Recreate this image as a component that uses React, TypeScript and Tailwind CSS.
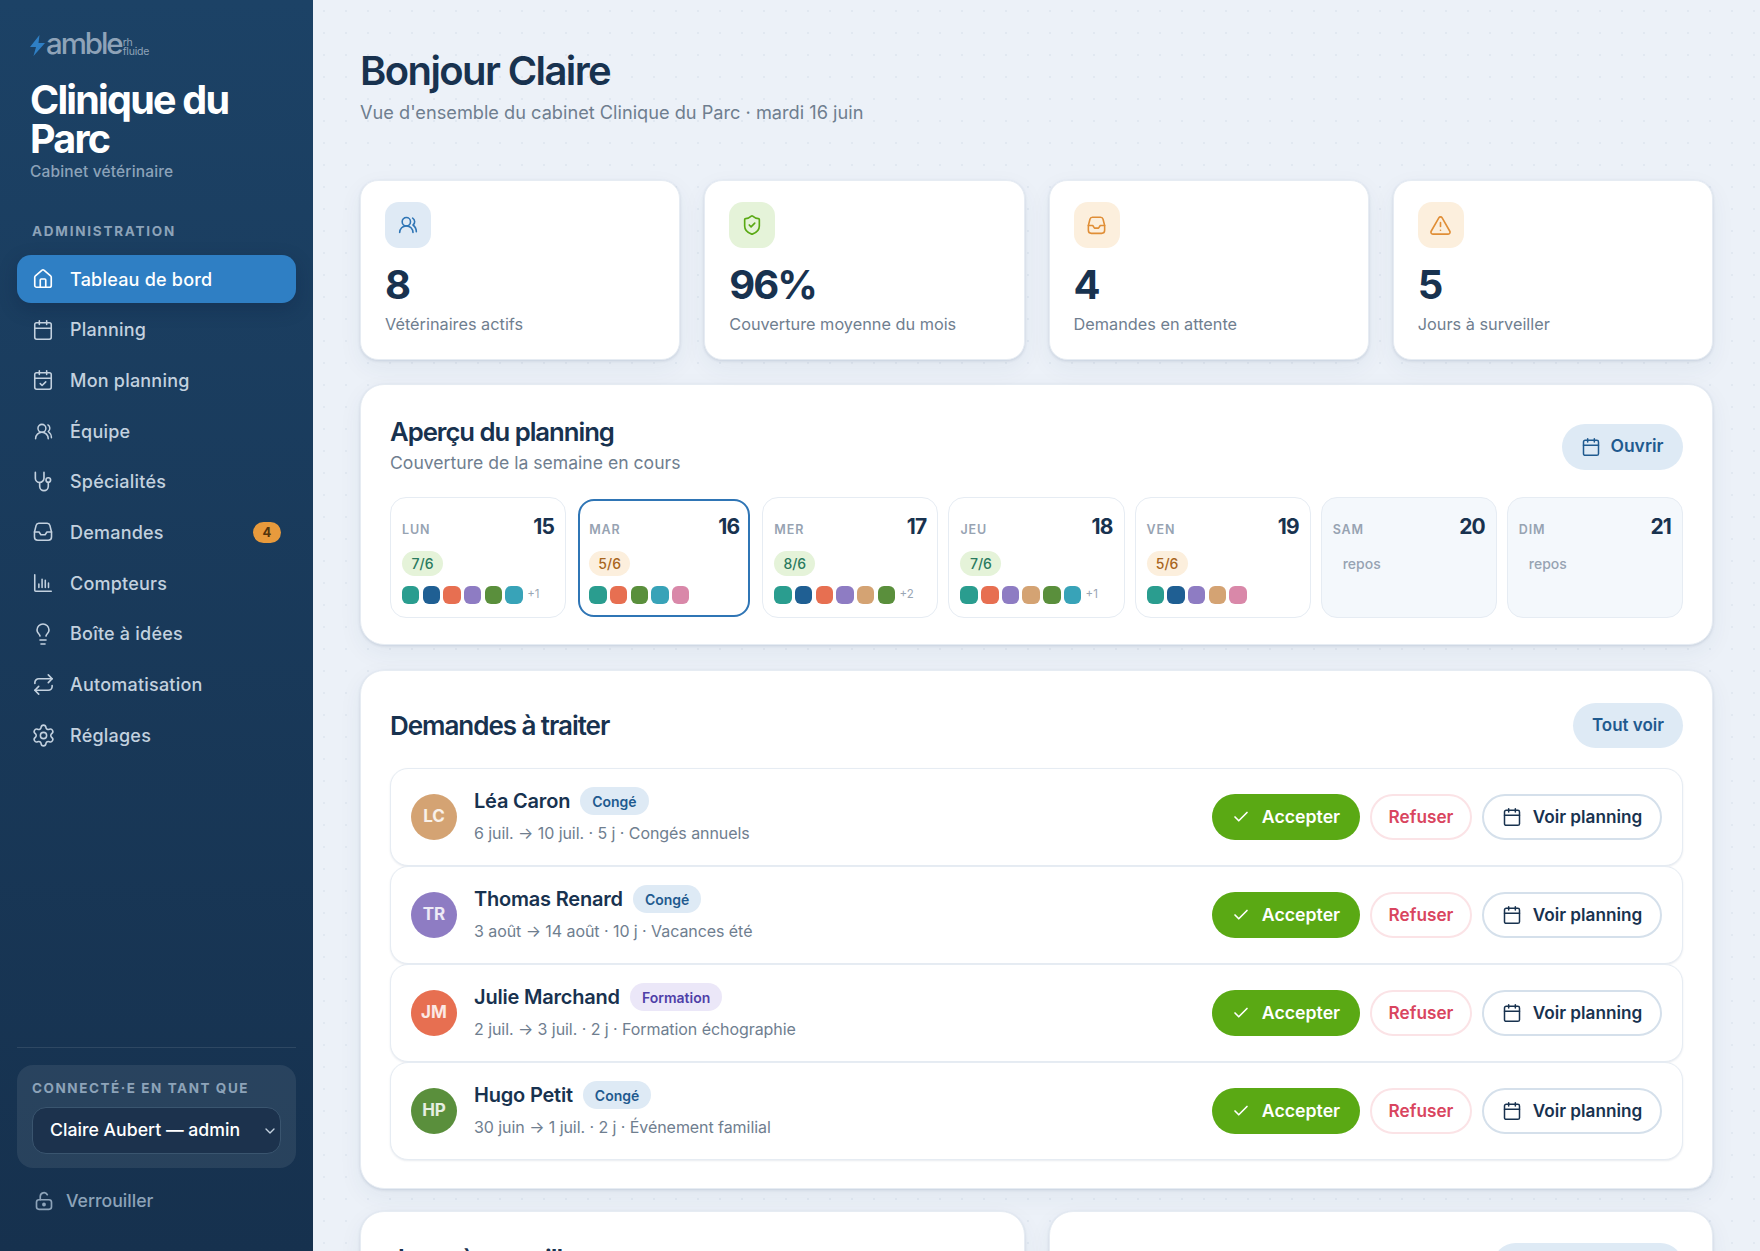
import {
  House, Calendar, CalendarCheck, UsersRound, Lightbulb, Repeat, Settings,
  ShieldCheck, TriangleAlert, Check, ChevronDown,
} from 'lucide-react'
import type { ReactNode } from 'react'

function ChartIcon() {
  return (
    <svg width="22" height="22" viewBox="0 0 24 24" fill="none" stroke="currentColor" strokeWidth="1.7" strokeLinecap="round" strokeLinejoin="round">
      <path d="M3 3v17a1 1 0 0 0 1 1h17" />
      <path d="M7.5 17v-4M11 17V8M14.5 17V9M18 17v-5" />
    </svg>
  )
}

function StethIcon() {
  return (
    <svg width="23" height="23" viewBox="0 0 24 24" fill="none" stroke="currentColor" strokeWidth="1.7" strokeLinecap="round" strokeLinejoin="round">
      <path d="M3.5 2.5v6a4.5 4.5 0 0 0 9 0v-6" />
      <path d="M8 13v4a4.5 4.5 0 0 0 9 0v-3" />
      <circle cx="17" cy="10.5" r="2.4" />
    </svg>
  )
}

function TrayIcon({ size = 22, width = 1.7 }: { size?: number; width?: number }) {
  return (
    <svg width={size} height={size} viewBox="0 0 24 24" fill="none" stroke="currentColor" strokeWidth={width} strokeLinecap="round" strokeLinejoin="round">
      <path d="M7.4 2.5h9.2a3 3 0 0 1 2.9 2.3l1.8 7.2v5.5a3.5 3.5 0 0 1-3.5 3.5H6.2a3.5 3.5 0 0 1-3.5-3.5V12l1.8-7.2a3 3 0 0 1 2.9-2.3Z" />
      <path d="M2.7 12h5l2 3h4.600l2-3h5" />
    </svg>
  )
}

function OpenLockIcon() {
  return (
    <svg width="20" height="20" viewBox="0 0 24 24" fill="none" stroke="currentColor" strokeWidth="2" strokeLinecap="round" strokeLinejoin="round">
      <rect x="3" y="10.500" width="18" height="11.500" rx="3" />
      <path d="M7.500 10.500V6.500a4.500 4.500 0 0 1 8.500-2" />
      <circle cx="12" cy="16.200" r="1.300" fill="currentColor" />
    </svg>
  )
}

const nav: { label: string; icon: ReactNode; badge?: string }[] = [
  { label: 'Tableau de bord', icon: <House size={22} strokeWidth={1.8} /> },
  { label: 'Planning', icon: <Calendar size={22} strokeWidth={1.7} /> },
  { label: 'Mon planning', icon: <CalendarCheck size={22} strokeWidth={1.7} /> },
  { label: 'Équipe', icon: <UsersRound size={19} strokeWidth={1.9} /> },
  { label: 'Spécialités', icon: <StethIcon /> },
  { label: 'Demandes', icon: <TrayIcon />, badge: '4' },
  { label: 'Compteurs', icon: <ChartIcon /> },
  { label: 'Boîte à idées', icon: <Lightbulb size={24} strokeWidth={1.6} /> },
  { label: 'Automatisation', icon: <Repeat size={23} strokeWidth={1.7} /> },
  { label: 'Réglages', icon: <Settings size={25} strokeWidth={1.5} /> },
]

const stats = [
  { value: '8', label: 'Vétérinaires actifs', bg: 'bg-[#dfeaf5]', fg: 'text-[#2f75b5]', icon: <UsersRound size={20} strokeWidth={1.9} /> },
  { value: '96%', label: 'Couverture moyenne du mois', bg: 'bg-[#e5f3d9]', fg: 'text-[#5aa914]', icon: <ShieldCheck size={22} strokeWidth={1.8} /> },
  { value: '4', label: 'Demandes en attente', bg: 'bg-[#fcefdd]', fg: 'text-[#e08e36]', icon: <TrayIcon size={21} width={1.8} /> },
  { value: '5', label: 'Jours à surveiller', bg: 'bg-[#fcefdd]', fg: 'text-[#e08e36]', icon: <TriangleAlert size={23} strokeWidth={1.7} /> },
]

const C = {
  teal: 'bg-[#2a9d8f]', navy: 'bg-[#1f5f93]', coral: 'bg-[#e76f51]', purple: 'bg-[#8e7cc3]',
  green: 'bg-[#5a8f3c]', cyan: 'bg-[#38a3b8]', tan: 'bg-[#d4a373]', pink: 'bg-[#d988a9]',
}

const days = [
  { d: 'LUN', n: '15', cov: '7/6', ok: true, dots: [C.teal, C.navy, C.coral, C.purple, C.green, C.cyan], more: '+1' },
  { d: 'MAR', n: '16', cov: '5/6', ok: false, today: true, dots: [C.teal, C.coral, C.green, C.cyan, C.pink] },
  { d: 'MER', n: '17', cov: '8/6', ok: true, dots: [C.teal, C.navy, C.coral, C.purple, C.tan, C.green], more: '+2' },
  { d: 'JEU', n: '18', cov: '7/6', ok: true, dots: [C.teal, C.coral, C.purple, C.tan, C.green, C.cyan], more: '+1' },
  { d: 'VEN', n: '19', cov: '5/6', ok: false, dots: [C.teal, C.navy, C.purple, C.tan, C.pink] },
  { d: 'SAM', n: '20', rest: true },
  { d: 'DIM', n: '21', rest: true },
]

const requests = [
  { initials: 'LC', color: 'bg-[#d4a373]', name: 'Léa Caron', tag: 'Congé', detail: '6 juil. → 10 juil. · 5 j · Congés annuels' },
  { initials: 'TR', color: 'bg-[#8e7cc3]', name: 'Thomas Renard', tag: 'Congé', detail: '3 août → 14 août · 10 j · Vacances été' },
  { initials: 'JM', color: 'bg-[#e76f51]', name: 'Julie Marchand', tag: 'Formation', detail: '2 juil. → 3 juil. · 2 j · Formation échographie' },
  { initials: 'HP', color: 'bg-[#5a8f3c]', name: 'Hugo Petit', tag: 'Congé', detail: '30 juin → 1 juil. · 2 j · Événement familial' },
]

const cardShadow = 'shadow-[0_1px_3px_rgba(30,60,100,0.14),0_8px_24px_rgba(30,60,100,0.06)]'

function Sidebar() {
  return (
    <aside className="flex w-[313px] shrink-0 flex-col bg-gradient-to-b from-[#1c4266] to-[#16314e] px-[17px]">
      <div className="mt-[25px] flex h-[38px] items-center pl-[13px]">
        <svg width="15" height="21" viewBox="0 0 15 21" className="mt-[3px]">
          <path d="M9.500 0 L0 12 H6 L3.500 21 L15 8 H8.500 Z" fill="#2f7fc4" />
        </svg>
        <span className="ml-[1px] text-[29.500px] font-medium leading-none tracking-[-0.07em] text-[#8fa3b8]">amble</span>
        <span className="mt-[5px] ml-[1px] flex flex-col text-[10.500px] leading-[9px] tracking-[-0.02em] text-[#8fa3b8]">
          <span>rh</span>
          <span>fluide</span>
        </span>
      </div>
      <h1 className="mt-[18px] pl-[13px] text-[39.500px] font-bold leading-[39px] tracking-[-0.045em] text-white">
        Clinique du
        <br />
        Parc
      </h1>
      <p className="mt-[3px] pl-[13px] text-[15.500px] font-medium leading-[20px] tracking-[0.01em] text-[#8da3b9]">Cabinet vétérinaire</p>
      <p className="mt-[39px] pl-[15px] text-[13.500px] font-bold leading-[20px] tracking-[0.13em] text-[#8da3b9]">ADMINISTRATION</p>

      <nav className="mt-[14px] flex flex-col gap-[2.700px]">
        {nav.map((item, i) => (
          <div
            key={item.label}
            className={
              'flex h-[48px] items-center rounded-[14px] pr-[15px] text-[18px] font-medium ' +
              (i === 0
                ? 'bg-[#2f7fc4] text-white shadow-[0_6px_18px_rgba(10,30,60,0.28)]'
                : 'text-[#c3d1df]')
            }
          >
            <span className="flex w-[53px] shrink-0 items-center justify-center pr-[1px]">{item.icon}</span>
            <span className="tracking-[0.012em]">{item.label}</span>
            {item.badge && (
              <span className="ml-auto flex h-[21px] w-[28px] items-center justify-center rounded-full bg-[#e89a3c] text-[13px] font-bold text-[#54340c]">
                {item.badge}
              </span>
            )}
          </div>
        ))}
      </nav>

      <div className="mt-auto border-t border-white/10 pt-[17px]">
        <div className="rounded-[16px] bg-white/[0.08] px-[15px] pt-[13px] pb-[14px]">
          <p className="text-[13.500px] font-bold leading-[20px] tracking-[0.115em] text-[#8da3b9]">CONNECTÉ·E EN TANT QUE</p>
          <div className="mt-[9px] flex h-[47px] items-center justify-between rounded-[14px] border border-[#3a556f] bg-[#1c324d] pr-[2px] pl-[17px] text-[17.700px] font-medium text-white">
            <span>Claire Aubert — admin</span>
            <ChevronDown size={16} strokeWidth={2} className="text-[#c3d1df]" />
          </div>
        </div>
        <div className="mt-[20px] mb-[37px] flex h-[26px] items-center pl-[17px] text-[17.700px] font-medium text-[#8da3b9]">
          <OpenLockIcon />
          <span className="ml-[12px]">Verrouiller</span>
        </div>
      </div>
    </aside>
  )
}

function StatCard({ s }: { s: (typeof stats)[number] }) {
  return (
    <div className={'h-[180px] rounded-[18px] border border-[#e6ecf3] bg-white pt-[21px] pl-[24px] ' + cardShadow}>
      <div className={'flex h-[46px] w-[46px] items-center justify-center rounded-[14px] ' + s.bg + ' ' + s.fg}>{s.icon}</div>
      <p className="mt-[15px] text-[40px] font-bold leading-[44px] tracking-[-0.05em] text-[#18324f]">{s.value}</p>
      <p className="mt-[5px] text-[16.300px] leading-[24px] text-[#6f7e8f]">{s.label}</p>
    </div>
  )
}

function DayTile({ day }: { day: (typeof days)[number] }) {
  const base = day.today
    ? 'mx-[2px] my-[1.500px] border-2 border-[#2f75b5] bg-white px-[9px] pt-[12.500px]'
    : day.rest
      ? 'border border-[#e6ecf3] bg-[#f4f8fc] px-[11px] pt-[15px]'
      : 'border border-[#e6ecf3] bg-white px-[11px] pt-[15px]'
  return (
    <div className={'rounded-[16px] ' + base}>
      <div className="flex h-[28px] items-baseline justify-between">
        <span className="text-[12.500px] font-semibold tracking-[0.07em] text-[#97a3b2]">{day.d}</span>
        <span className="text-[21px] font-bold leading-[28px] tracking-[-0.04em] text-[#18324f]">{day.n}</span>
      </div>
      {day.rest ? (
        <p className="mt-[10px] h-[25px] pl-[10px] text-[14px] font-medium leading-[25px] text-[#97a3b2]">repos</p>
      ) : (
        <>
          <span
            className={
              'mt-[10px] flex h-[25px] w-[41px] items-center justify-center rounded-full text-[14px] font-medium ' +
              (day.ok ? 'bg-[#e5f3d9] text-[#2a7a5f]' : 'bg-[#fcefdd] text-[#a8651c]')
            }
          >
            {day.cov}
          </span>
          <div className="mt-[10px] flex items-center gap-[3.300px]">
            {day.dots?.map((c, i) => (
              <span key={i} className={'h-[18px] w-[17.400px] rounded-[6px] ' + c} />
            ))}
            {day.more && <span className="ml-[1px] text-[11.500px] text-[#9aa6b4]">{day.more}</span>}
          </div>
        </>
      )}
    </div>
  )
}

function RequestRow({ r }: { r: (typeof requests)[number] }) {
  return (
    <div className="flex h-[98px] items-center rounded-[18px] border border-[#e6ecf3] bg-white pr-[20px] pl-[20px] shadow-[0_1px_2px_rgba(30,60,100,0.1)]">
      <div className={'flex h-[46px] w-[46px] shrink-0 items-center justify-center rounded-full text-[17px] font-bold text-white/85 ' + r.color}>
        {r.initials}
      </div>
      <div className="-mt-[2px] ml-[17px]">
        <div className="flex h-[28px] items-center">
          <span className="text-[20px] font-semibold tracking-[-0.01em] text-[#18324f]">{r.name}</span>
          <span
            className={
              'ml-[10px] flex h-[28px] items-center rounded-full px-[12px] text-[14px] font-semibold ' +
              (r.tag === 'Formation' ? 'bg-[#ebe7f8] text-[#4f3fa8]' : 'bg-[#deeaf5] text-[#1f5a8f]')
            }
          >
            {r.tag}
          </span>
        </div>
        <p className="mt-[6px] text-[16px] leading-[24px] tracking-[-0.004em] text-[#6f7e8f]">{r.detail}</p>
      </div>
      <div className="ml-auto flex items-center gap-[10px] text-[17.200px] font-semibold">
        <button className="flex h-[46px] w-[148px] items-center justify-center gap-[12px] rounded-full bg-[#5aa914] text-[17.700px] text-white">
          <Check size={18} strokeWidth={2.2} />
          Accepter
        </button>
        <button className="h-[46px] w-[102px] rounded-full border-2 border-[#fbe3e6] bg-white text-[#d9455f]">Refuser</button>
        <button className="flex h-[46px] w-[180px] items-center justify-center gap-[11px] rounded-full border-2 border-[#d5e0eb] bg-white text-[#18324f]">
          <Calendar size={20} strokeWidth={1.8} />
          Voir planning
        </button>
      </div>
    </div>
  )
}

export default function App() {
  return (
    <div className="flex h-screen overflow-hidden bg-[#ecf1f8] font-[Inter,sans-serif]">
      <Sidebar />
      <main className="min-w-0 flex-1 bg-[radial-gradient(#e1e8f1_1px,transparent_1px)] bg-[size:22px_22px] pt-[45px] pr-[47px] pl-[47px]">
        <h2 className="text-[40px] font-semibold leading-[52px] tracking-[-0.04em] text-[#18324f]">Bonjour Claire</h2>
        <p className="mt-[1px] text-[18.200px] leading-[28px] text-[#6f7e8f]">Vue d'ensemble du cabinet Clinique du Parc · mardi 16 juin</p>

        <div className="mt-[54px] grid grid-cols-4 gap-[24px]">
          {stats.map((s) => (
            <StatCard key={s.label} s={s} />
          ))}
        </div>

        <section className={'mt-[24px] h-[261px] rounded-[24px] border border-[#e6ecf3] bg-white px-[29px] pt-[32px] ' + cardShadow}>
          <div className="flex items-center justify-between">
            <div>
              <h3 className="text-[25.700px] font-semibold leading-[30px] tracking-[-0.04em] text-[#18324f]">Aperçu du planning</h3>
              <p className="mt-[3px] text-[17.600px] leading-[26px] text-[#6f7e8f]">Couverture de la semaine en cours</p>
            </div>
            <button className="flex h-[46px] w-[121px] items-center justify-center gap-[9px] rounded-full bg-[#deeaf5] text-[17.500px] font-semibold text-[#1f5a8f]">
              <Calendar size={20} strokeWidth={1.8} />
              Ouvrir
            </button>
          </div>
          <div className="mt-[21px] grid h-[121px] grid-cols-7 gap-[10px]">
            {days.map((d) => (
              <DayTile key={d.d} day={d} />
            ))}
          </div>
        </section>

        <section className={'mt-[25px] h-[519px] rounded-[24px] border border-[#e6ecf3] bg-white px-[29px] pt-[32px] ' + cardShadow}>
          <div className="flex h-[45px] items-center justify-between">
            <h3 className="text-[26px] font-semibold tracking-[-0.04em] text-[#18324f]">Demandes à traiter</h3>
            <button className="h-[45px] w-[110px] rounded-full bg-[#deeaf5] text-[17px] font-semibold text-[#1f5a8f]">Tout voir</button>
          </div>
          <div className="mt-[20px] flex flex-col">
            {requests.map((r) => (
              <RequestRow key={r.name} r={r} />
            ))}
          </div>
        </section>

        <div className="mt-[22px] grid grid-cols-2 gap-[24px]">
          <section className={'h-[200px] rounded-[24px] border border-[#e6ecf3] bg-white px-[29px] pt-[31px] ' + cardShadow}>
            <h3 className="text-[25.700px] font-semibold leading-[32px] tracking-[-0.04em] text-[#18324f]">Jours à surveiller</h3>
          </section>
          <section className={'flex h-[200px] justify-end rounded-[24px] border border-[#e6ecf3] bg-white px-[29px] pt-[31px] ' + cardShadow}>
            <span className="h-[45px] w-[190px] rounded-full bg-[#deeaf5]" />
          </section>
        </div>
      </main>
    </div>
  )
}
